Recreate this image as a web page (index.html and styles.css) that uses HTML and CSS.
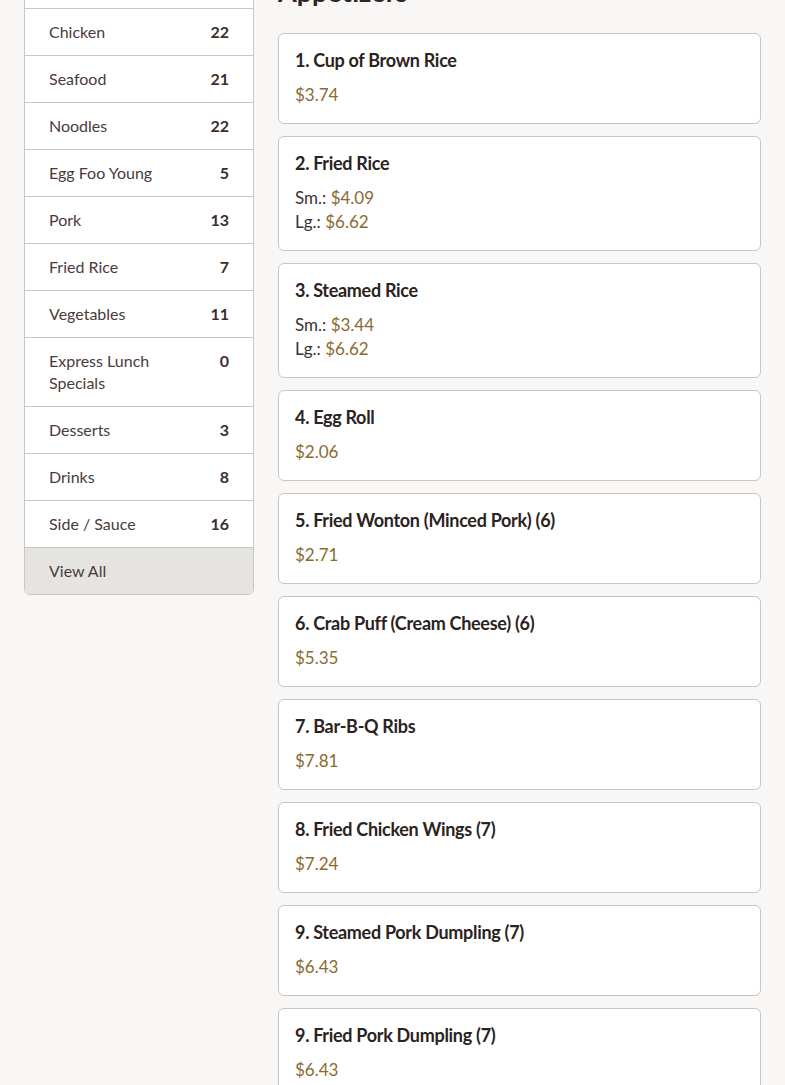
FILE: index.html
```html
<!DOCTYPE html>
<html lang="en">
<head>
<meta charset="utf-8">
<title>Menu - Appetizers</title>
<link rel="stylesheet" href="styles.css">
</head>
<body>
<div class="page">
  <aside class="sidebar">
    <ul class="cats">
      <li class="cat"><span class="cat-name">Appetizers</span><span class="cat-count">13</span></li>
      <li class="cat"><span class="cat-name">Chicken</span><span class="cat-count">22</span></li>
      <li class="cat"><span class="cat-name">Seafood</span><span class="cat-count">21</span></li>
      <li class="cat"><span class="cat-name">Noodles</span><span class="cat-count">22</span></li>
      <li class="cat"><span class="cat-name">Egg Foo Young</span><span class="cat-count">5</span></li>
      <li class="cat"><span class="cat-name">Pork</span><span class="cat-count">13</span></li>
      <li class="cat"><span class="cat-name">Fried Rice</span><span class="cat-count">7</span></li>
      <li class="cat"><span class="cat-name">Vegetables</span><span class="cat-count">11</span></li>
      <li class="cat"><span class="cat-name">Express Lunch Specials</span><span class="cat-count">0</span></li>
      <li class="cat"><span class="cat-name">Desserts</span><span class="cat-count">3</span></li>
      <li class="cat"><span class="cat-name">Drinks</span><span class="cat-count">8</span></li>
      <li class="cat"><span class="cat-name">Side / Sauce</span><span class="cat-count">16</span></li>
      <li class="cat cat-all"><span class="cat-name">View All</span></li>
    </ul>
  </aside>
  <main class="main">
    <h2 class="section-title">Appetizers</h2>
    <div class="items">
      <div class="item"><h3 class="item-title">1. Cup of Brown Rice</h3><div class="prices"><div class="price">$3.74</div></div></div>
      <div class="item"><h3 class="item-title">2. Fried Rice</h3><div class="prices"><div>Sm.: <span class="price">$4.09</span></div><div>Lg.: <span class="price">$6.62</span></div></div></div>
      <div class="item"><h3 class="item-title">3. Steamed Rice</h3><div class="prices"><div>Sm.: <span class="price">$3.44</span></div><div>Lg.: <span class="price">$6.62</span></div></div></div>
      <div class="item"><h3 class="item-title">4. Egg Roll</h3><div class="prices"><div class="price">$2.06</div></div></div>
      <div class="item"><h3 class="item-title">5. Fried Wonton (Minced Pork) (6)</h3><div class="prices"><div class="price">$2.71</div></div></div>
      <div class="item"><h3 class="item-title">6. Crab Puff (Cream Cheese) (6)</h3><div class="prices"><div class="price">$5.35</div></div></div>
      <div class="item"><h3 class="item-title">7. Bar-B-Q Ribs</h3><div class="prices"><div class="price">$7.81</div></div></div>
      <div class="item"><h3 class="item-title">8. Fried Chicken Wings (7)</h3><div class="prices"><div class="price">$7.24</div></div></div>
      <div class="item"><h3 class="item-title">9. Steamed Pork Dumpling (7)</h3><div class="prices"><div class="price">$6.43</div></div></div>
      <div class="item"><h3 class="item-title">9. Fried Pork Dumpling (7)</h3><div class="prices"><div class="price">$6.43</div></div></div>
    </div>
  </main>
</div>
</body>
</html>
```
FILE: styles.css
```css
* { box-sizing: border-box; }
html, body { margin: 0; padding: 0; }
body {
  background: #f8f7f5;
  font-family: Lato, "Open Sans", "Noto Sans", sans-serif;
  color: #3d3131;
  overflow: hidden;
}
.page {
  display: flex;
  gap: 24px;
  padding: 0 24px;
  margin-top: -39px;
  align-items: flex-start;
}
.sidebar {
  width: 230px;
  flex: 0 0 230px;
  background: #fff;
  border: 1px solid #c9c6c3;
  border-radius: 6px;
  overflow: hidden;
}
.cats { list-style: none; margin: 0; padding: 0; }
.cat {
  display: flex;
  justify-content: space-between;
  align-items: flex-start;
  gap: 12px;
  padding: 12px 24px;
  font-size: 16px;
  line-height: 22px;
  border-top: 1px solid #c9c6c3;
  color: #4a3b3b;
}
.cat:first-child { border-top: none; }
.cat-count { font-weight: 700; color: #3a2e2e; }
.cat-all { background: #e6e4e1; }
.main { flex: 1; min-width: 0; padding-top: 14px; }
.section-title {
  margin: 0 0 24px;
  font-size: 27px;
  line-height: 34px;
  font-weight: 700;
  color: #2e2424;
}
.items { display: flex; flex-direction: column; gap: 12px; }
.item {
  background: #fff;
  border: 1px solid #c9c6c3;
  border-radius: 6px;
  padding: 15px 16px 16px;
}
.item-title {
  margin: 0 0 12px;
  font-size: 18px;
  line-height: 22px;
  font-weight: 700;
  color: #2b2222;
  letter-spacing: -0.3px;
}
.prices { font-size: 17px; line-height: 24px; color: #3d3131; }
.price { color: #8a6a30; }
```
